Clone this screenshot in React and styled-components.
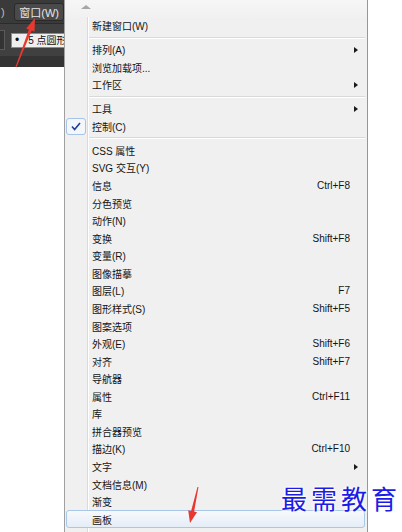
import styled, { createGlobalStyle } from "styled-components";

const GlobalStyle = createGlobalStyle`
  html, body {
    margin: 0;
    padding: 0;
    background: #ffffff;
  }
  body {
    font-family: "Liberation Sans", "Noto Sans CJK SC", sans-serif;
  }
`;

const menuItems = [
  { label: "新建窗口(W)" },
  { sep: true },
  { label: "排列(A)", sub: true },
  { label: "浏览加载项..." },
  { label: "工作区", sub: true },
  { sep: true },
  { label: "工具", sub: true },
  { label: "控制(C)", checked: true },
  { sep: true },
  { label: "CSS 属性" },
  { label: "SVG 交互(Y)" },
  { label: "信息", key: "Ctrl+F8" },
  { label: "分色预览" },
  { label: "动作(N)" },
  { label: "变换", key: "Shift+F8" },
  { label: "变量(R)" },
  { label: "图像描摹" },
  { label: "图层(L)", key: "F7" },
  { label: "图形样式(S)", key: "Shift+F5" },
  { label: "图案选项" },
  { label: "外观(E)", key: "Shift+F6" },
  { label: "对齐", key: "Shift+F7" },
  { label: "导航器" },
  { label: "属性", key: "Ctrl+F11" },
  { label: "库" },
  { label: "拼合器预览" },
  { label: "描边(K)", key: "Ctrl+F10" },
  { label: "文字", sub: true },
  { label: "文档信息(M)" },
  { label: "渐变" },
  { label: "画板", active: true },
];

function App() {
  return (
    <>
      <GlobalStyle />
      <Page>
        <Chrome>
          <MenuBar>
            <Clipped>)</Clipped>
            <BarButton>窗口(W)</BarButton>
          </MenuBar>
          <ToolRow>
            <EdgeBox />
            <Field>
              <span className="dot">•</span>5 点圆形
            </Field>
          </ToolRow>
          <Strip />
        </Chrome>

        <Menu>
          <ScrollRow>
            <UpArrow />
          </ScrollRow>
          <List>
            {menuItems.map((it, i) =>
              it.sep ? (
                <Separator key={i} />
              ) : (
                <Item key={i} $active={it.active}>
                  <CheckCell $on={it.checked}>
                    {it.checked && (
                      <svg width="10" height="9" viewBox="0 0 10 9">
                        <path
                          d="M1 4.6 L3.6 7.6 L9 1"
                          fill="none"
                          stroke="#1f3f9c"
                          strokeWidth="1.6"
                        />
                      </svg>
                    )}
                  </CheckCell>
                  <Label>{it.label}</Label>
                  <Shortcut>{it.key}</Shortcut>
                  <SubCell>{it.sub && <SubArrow />}</SubCell>
                </Item>
              )
            )}
          </List>
        </Menu>

        <Watermark>最需教育</Watermark>

        <Arrows width="402" height="532" viewBox="0 0 402 532">
          <polygon
            points="35,18 34.5,31.7 31.7,30.6 16.5,67.2 15.5,66.8 28.9,29.6 26.1,28.5"
            fill="#e8382f"
          />
          <polygon
            points="190,523 197,512.3 194.1,511.6 198.5,487.1 197.5,486.9 191.1,511 188.2,510.3"
            fill="#e8382f"
          />
        </Arrows>
      </Page>
    </>
  );
}

const Page = styled.div`
  position: relative;
  width: 402px;
  height: 532px;
  overflow: hidden;
  display: flex;
  align-items: flex-start;
  background: #ffffff;
`;

const Chrome = styled.div`
  width: 64px;
  flex: none;
  display: flex;
  flex-direction: column;
  overflow: hidden;
`;

const MenuBar = styled.div`
  height: 23px;
  background: #3a3a3a;
  border-bottom: 1px solid #2b2b2b;
  display: flex;
  align-items: center;
`;

const Clipped = styled.span`
  width: 14px;
  padding-left: 1px;
  color: #bdbdbd;
  font-size: 11px;
  font-family: "Liberation Sans", sans-serif;
`;

const BarButton = styled.div`
  height: 16px;
  padding: 0 4px;
  flex: none;
  display: flex;
  align-items: center;
  background: #4a4a4a;
  border: 1px solid #2a2a2a;
  border-radius: 3px;
  color: #e6e6e6;
  font-size: 11px;
  font-family: "Liberation Sans", "Noto Sans CJK SC", sans-serif;
  white-space: nowrap;
`;

const ToolRow = styled.div`
  height: 32px;
  background: #404040;
  display: flex;
  align-items: center;
  gap: 6px;
`;

const EdgeBox = styled.div`
  width: 4px;
  height: 18px;
  flex: none;
  background: #333;
  border: 1px solid #5a5a5a;
  border-left: none;
`;

const Field = styled.div`
  height: 13px;
  padding-left: 3px;
  flex: none;
  width: 60px;
  background: #efefef;
  border: 1px solid #8a8a8a;
  color: #111;
  font-size: 10px;
  line-height: 13px;
  white-space: nowrap;
  font-family: "Liberation Sans", "Noto Sans CJK SC", sans-serif;

  .dot {
    font-size: 12px;
    margin-right: 9px;
  }
`;

const Strip = styled.div`
  height: 11px;
  background: #333333;
`;

const Menu = styled.div`
  width: 302px;
  height: 540px;
  flex: none;
  background: #f0f0f0;
  border-left: 1px solid #a0a0a0;
  border-right: 1px solid #979797;
  display: flex;
  flex-direction: column;
  font-family: "Liberation Sans", "Noto Sans CJK SC", sans-serif;
  font-size: 10px;
  color: #141414;
`;

const ScrollRow = styled.div`
  height: 17px;
  flex: none;
  background: linear-gradient(#f6f6f6, #f1f1f1);
  display: flex;
  align-items: center;
  padding-left: 16px;
`;

const UpArrow = styled.div`
  width: 0;
  height: 0;
  border-left: 5px solid transparent;
  border-right: 5px solid transparent;
  border-bottom: 4px solid #a6a6a6;
  margin-top: -3px;
`;

const List = styled.div`
  flex: 1;
  background:
    linear-gradient(
      to right,
      transparent 22px,
      #dadada 22px,
      #dadada 23px,
      #ffffff 23px,
      #ffffff 24px,
      transparent 24px
    );
`;

const Item = styled.div`
  height: 17.57px;
  box-sizing: border-box;
  margin: 0 2px 0 1px;
  display: grid;
  grid-template-columns: 19px 1fr auto 14px;
  align-items: center;
  border: 1px solid ${(p) => (p.$active ? "#a9c7e9" : "transparent")};
  border-radius: 3px;
  background: ${(p) =>
    p.$active ? "linear-gradient(#f7f9fc, #e5edf7)" : "transparent"};
`;

const CheckCell = styled.div`
  align-self: stretch;
  margin: -1px 0 -1px -1px;
  box-sizing: border-box;
  display: flex;
  align-items: center;
  justify-content: center;
  border: 1px solid ${(p) => (p.$on ? "#a7c3e6" : "transparent")};
  border-radius: 3px;
  background: ${(p) => (p.$on ? "#f3f6fa" : "transparent")};
`;

const Label = styled.span`
  padding-left: 6px;
  white-space: nowrap;
`;

const Shortcut = styled.span`
  white-space: nowrap;
  text-align: right;
`;

const SubCell = styled.div`
  display: flex;
  align-items: center;
  padding-left: 4px;
`;

const SubArrow = styled.div`
  width: 0;
  height: 0;
  border-top: 3.5px solid transparent;
  border-bottom: 3.5px solid transparent;
  border-left: 4px solid #1a1a1a;
`;

const Separator = styled.div`
  height: 6.43px;
  margin: 0 2px 0 24px;
  display: flex;
  align-items: center;
  flex-direction: column;
  justify-content: center;

  &::before {
    content: "";
    display: block;
    width: 100%;
    height: 1px;
    background: #d9d9d9;
  }
  &::after {
    content: "";
    display: block;
    width: 100%;
    height: 1px;
    background: #ffffff;
  }
`;

const Watermark = styled.div`
  position: absolute;
  left: 281px;
  top: 485px;
  font-family: "Noto Sans CJK SC", sans-serif;
  font-size: 26px;
  line-height: 26px;
  letter-spacing: 4px;
  color: #1c1ce6;
  white-space: nowrap;
  text-shadow: 0 0 2px #fff, 0 0 2px #fff, 0 0 3px #fff, 0 0 3px #fff;
`;

const Arrows = styled.svg`
  position: absolute;
  left: 0;
  top: 0;
  pointer-events: none;
`;

export default App;
